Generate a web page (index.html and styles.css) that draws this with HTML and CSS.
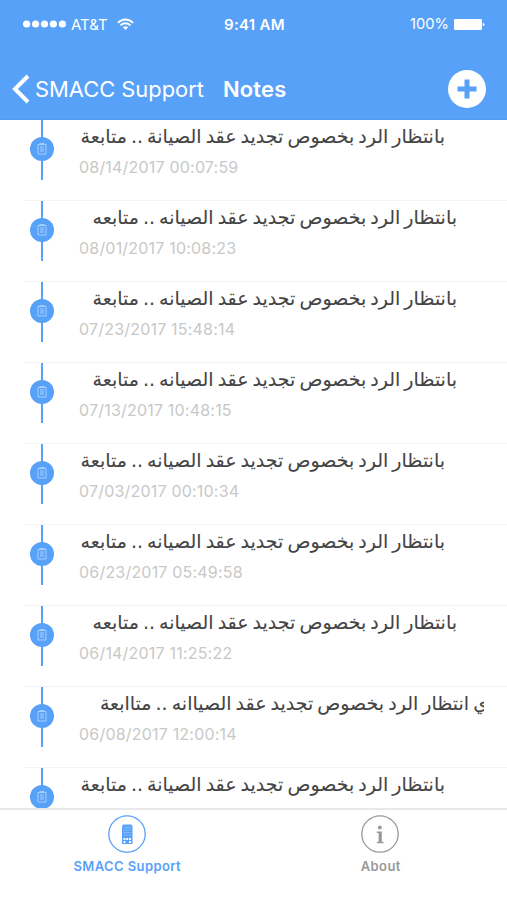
FILE: index.html
```html
<!DOCTYPE html>
<html lang="en">
<head>
  <meta charset="UTF-8">
  <title>Notes</title>
  <link rel="stylesheet" href="styles.css">
</head>
<body>
  <svg class="sprite" aria-hidden="true">
    <symbol id="icon-note" viewBox="0 0 10 12">
      <path d="M1 1.5h8v9.5H1z M2.500 .6h5 M3 4h4 M3 6h4 M3 8h4" fill="none" stroke="#a6cffc" stroke-width="1"/>
    </symbol>
  </svg>

  <header>
    <div class="status-bar">
      <div class="carrier">
        <svg width="43" height="8" viewBox="0 0 43 8" fill="#fff">
          <circle cx="3.6" cy="4" r="3.6"/>
          <circle cx="12.6" cy="4" r="3.6"/>
          <circle cx="21.5" cy="4" r="3.6"/>
          <circle cx="30.4" cy="4" r="3.6"/>
          <circle cx="39.4" cy="4" r="3.6"/>
        </svg>
        <span>AT&amp;T</span>
        <svg class="wifi" width="17" height="13" viewBox="0 0 17 13" fill="none" stroke="#fff" stroke-width="1.8">
          <path d="M1 4.8c4.2-4.4 10.8-4.4 15 0"/>
          <path d="M3.5 7.400c2.900-2.900 7.100-2.900 10 0"/>
          <path d="M5.800 9.300Q8.500 7.200 11.200 9.300L8.500 12z" fill="#fff" stroke="none"/>
        </svg>
      </div>
      <span class="time">9:41 AM</span>
      <div class="power">
        <span>100%</span>
        <svg width="31" height="11" viewBox="0 0 31 11" fill="#fff">
          <rect x="0" y="0" width="28" height="11" rx="1"/>
          <path d="M28.800 3.500L31 5.500l-2.200 2z"/>
        </svg>
      </div>
    </div>
    <nav class="nav-bar">
      <svg class="back" width="18" height="30" viewBox="0 0 18 30" fill="none" stroke="#fff" stroke-width="4">
        <path d="M16 2L3 15l13 13"/>
      </svg>
      <span class="back-title">SMACC Support</span>
      <span class="title">Notes</span>
      <svg class="add" width="38" height="38" viewBox="0 0 38 38">
        <circle cx="19" cy="19" r="19" fill="#fff"/>
        <path d="M19 9.500v19M9.500 19h19" stroke="#58a1f8" stroke-width="5"/>
      </svg>
    </nav>
  </header>

  <main class="notes">
    <div class="note">
      <div class="marker"><span class="dot"><svg><use href="#icon-note"/></svg></span></div>
      <div class="content">
        <p class="text" dir="rtl">بانتظار الرد بخصوص تجديد عقد الصيانة .. متابعة</p>
        <p class="date">08/14/2017 00:07:59</p>
      </div>
    </div>
    <div class="note">
      <div class="marker"><span class="dot"><svg><use href="#icon-note"/></svg></span></div>
      <div class="content">
        <p class="text spaced" dir="rtl">بانتظار الرد بخصوص تجديد عقد الصيانه .. متابعه</p>
        <p class="date">08/01/2017 10:08:23</p>
      </div>
    </div>
    <div class="note">
      <div class="marker"><span class="dot"><svg><use href="#icon-note"/></svg></span></div>
      <div class="content">
        <p class="text spaced" dir="rtl">بانتظار الرد بخصوص تجديد عقد الصيانه .. متابعة</p>
        <p class="date">07/23/2017 15:48:14</p>
      </div>
    </div>
    <div class="note">
      <div class="marker"><span class="dot"><svg><use href="#icon-note"/></svg></span></div>
      <div class="content">
        <p class="text spaced" dir="rtl">بانتظار الرد بخصوص تجديد عقد الصيانه .. متابعة</p>
        <p class="date">07/13/2017 10:48:15</p>
      </div>
    </div>
    <div class="note">
      <div class="marker"><span class="dot"><svg><use href="#icon-note"/></svg></span></div>
      <div class="content">
        <p class="text" dir="rtl">بانتظار الرد بخصوص تجديد عقد الصيانه .. متابعة</p>
        <p class="date">07/03/2017 00:10:34</p>
      </div>
    </div>
    <div class="note">
      <div class="marker"><span class="dot"><svg><use href="#icon-note"/></svg></span></div>
      <div class="content">
        <p class="text" dir="rtl">بانتظار الرد بخصوص تجديد عقد الصيانه .. متابعه</p>
        <p class="date">06/23/2017 05:49:58</p>
      </div>
    </div>
    <div class="note">
      <div class="marker"><span class="dot"><svg><use href="#icon-note"/></svg></span></div>
      <div class="content">
        <p class="text spaced" dir="rtl">بانتظار الرد بخصوص تجديد عقد الصيانه .. متابعه</p>
        <p class="date">06/14/2017 11:25:22</p>
      </div>
    </div>
    <div class="note">
      <div class="marker"><span class="dot"><svg><use href="#icon-note"/></svg></span></div>
      <div class="content">
        <p class="text cut" dir="rtl">ي انتظار الرد بخصوص تجديد عقد الصياانه .. متاابعة</p>
        <p class="date">06/08/2017 12:00:14</p>
      </div>
    </div>
    <div class="note">
      <div class="marker"><span class="dot"><svg><use href="#icon-note"/></svg></span></div>
      <div class="content">
        <p class="text" dir="rtl">بانتظار الرد بخصوص تجديد عقد الصيانة .. متابعة</p>
      </div>
    </div>
  </main>

  <footer class="tab-bar">
    <div class="tab active">
      <svg width="38" height="38" viewBox="0 0 38 38">
        <circle cx="19" cy="19" r="18.200" fill="none" stroke="#58a1f8" stroke-width="1.300"/>
        <path d="M15 9.500h8.500l1 2v17.500h-10.500v-17.500z" fill="#58a1f8"/>
        <path d="M15.500 12.500h7.500M15.500 15h7.500M15.500 17.500h7.500M15.500 20h7.500" stroke="#8bbffa" stroke-width=".8"/>
        <path d="M15.500 24h1.900M18.300 24h1.900M21.100 24h1.900M15.500 27h1.900M21.100 27h1.900" stroke="#fff" stroke-width="1.800"/>
      </svg>
      <span>SMACC Support</span>
    </div>
    <div class="tab">
      <svg width="38" height="38" viewBox="0 0 38 38">
        <circle cx="19" cy="19" r="18.200" fill="none" stroke="#999" stroke-width="1.300"/>
        <circle cx="18.800" cy="12.500" r="2" fill="#999"/>
        <path d="M15.800 16.500h5v10.300h1.800v1.400h-6.800v-1.400h1.800v-8.700h-1.800z" fill="#999"/>
      </svg>
      <span>About</span>
    </div>
  </footer>
</body>
</html>
```
FILE: styles.css
```css
body {
  margin: 0;
  height: 900px;
  display: flex;
  flex-direction: column;
  overflow: hidden;
  font-family: Inter, sans-serif;
  background-color: #fff;
}

p {
  margin: 0;
}

.sprite {
  position: absolute;
  width: 0;
  height: 0;
}

header {
  flex: none;
  height: 120px;
  box-sizing: border-box;
  background-color: #58a1f8;
  border-bottom: 1px solid #559bee;
  color: #fff;
}

.status-bar {
  display: grid;
  grid-template-columns: 1fr auto 1fr;
  align-items: center;
  height: 48px;
  padding: 0 22px 0 23px;
  font-size: 15px;
}

.carrier, .power {
  display: flex;
  align-items: center;
}

.carrier span {
  margin-left: 5px;
}

.wifi {
  margin-left: 9px;
}

.time {
  padding-left: 1px;
  font-weight: 600;
  letter-spacing: 0.3px;
}

.power {
  justify-content: flex-end;
  gap: 5px;
  font-size: 14.7px;
}

.nav-bar {
  display: flex;
  align-items: center;
  height: 82px;
  padding: 0 21px 0 12px;
  font-size: 21.9px;
}

.back-title {
  margin-left: 5px;
}

.title {
  margin-left: 19px;
  font-weight: 600;
  letter-spacing: 0.2px;
}

.add {
  margin-left: auto;
}

.notes {
  flex: 1;
  min-height: 0;
  overflow: hidden;
}

.note {
  display: flex;
  height: 81px;
  margin-left: 24px;
  box-sizing: border-box;
  border-bottom: 1px solid #f3f3f3;
}

/* vertical timeline line with the round icon on it */
.marker {
  flex: none;
  display: flex;
  justify-content: center;
  width: 36px;
  height: 60px;
  background: linear-gradient(#58a1f8, #58a1f8) center / 2px 100% no-repeat;
}

.dot {
  display: flex;
  align-items: center;
  justify-content: center;
  width: 24px;
  height: 24px;
  margin-top: 17px;
  border-radius: 50%;
  background-color: #58a1f8;
}

.dot svg {
  width: 10px;
  height: 12px;
}

.content {
  width: 405px;
  margin-left: 19px;
  overflow: hidden;
}

.text {
  width: 366px;
  height: 34px;
  line-height: 32px;
  font-family: "DejaVu Sans", sans-serif;
  font-size: 19px;
  word-spacing: -2px;
  color: #444;
  white-space: nowrap;
  -webkit-text-stroke: 0.1px #444;
}

.text.spaced {
  margin-left: 12px;
}

/* runs past the right edge of the content */
.text.cut {
  width: 388px;
  margin-left: 21px;
}

.date {
  line-height: 26px;
  font-size: 16px;
  letter-spacing: 0.2px;
  color: #c8c8c8;
}

.tab-bar {
  flex: none;
  display: flex;
  height: 92px;
  box-sizing: border-box;
  border-top: 2px solid #e8e8e8;
}

.tab {
  flex: 1;
  display: flex;
  flex-direction: column;
  align-items: center;
  padding-top: 5px;
  color: #999;
  font-size: 13px;
  font-weight: 600;
  letter-spacing: 0.4px;
}

.tab span {
  margin-top: 5px;
  padding-left: 1px;
}

.tab.active {
  color: #58a1f8;
}
```
